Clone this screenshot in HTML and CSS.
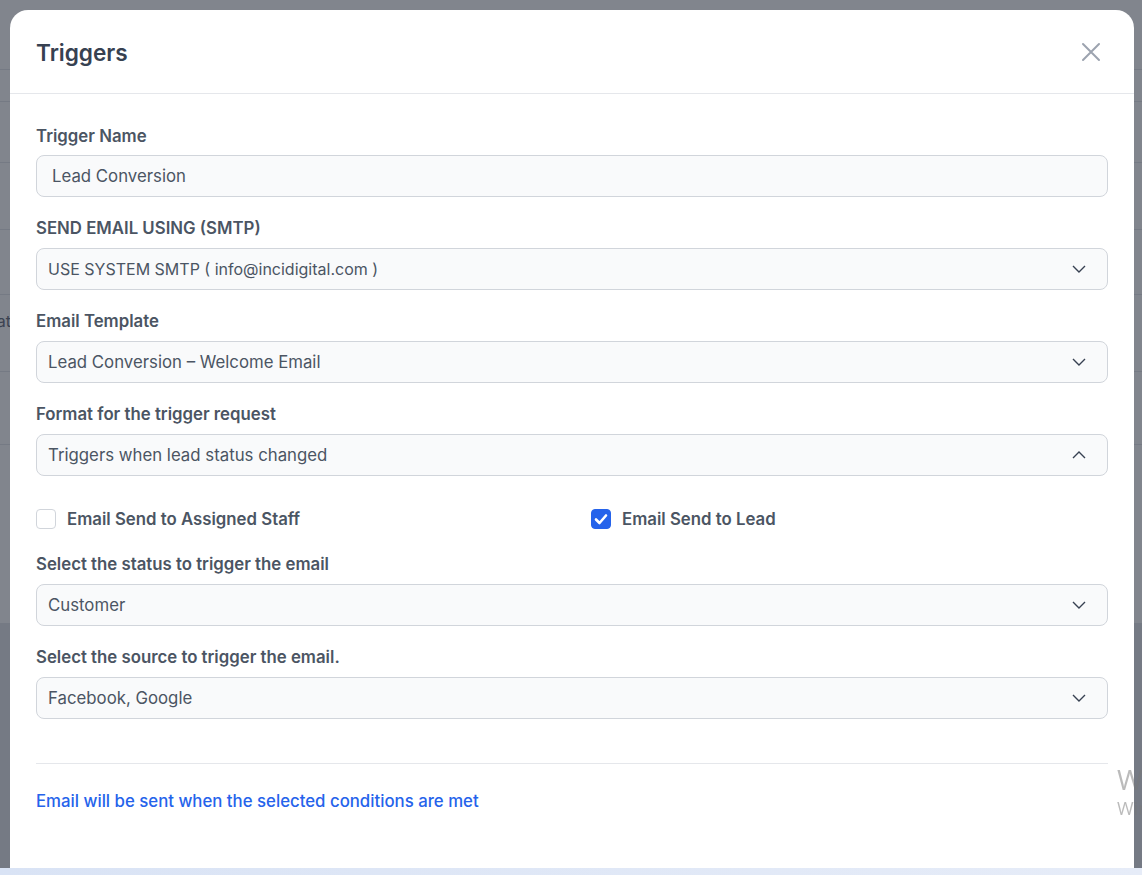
FILE: index.html
```html
<!DOCTYPE html>
<html lang="en">
<head>
  <meta charset="UTF-8">
  <meta name="viewport" content="width=device-width, initial-scale=1.0">
  <title>Triggers</title>
  <link rel="stylesheet" href="styles.css">
</head>
<body>
  <div class="page">
    <div class="page-table">
      <div class="row" style="height: 70px"></div>
      <div class="row" style="height: 32px"></div>
      <div class="row" style="height: 61px"></div>
      <div class="row" style="height: 67px"></div>
      <div class="row" style="height: 65px"></div>
      <div class="row row-text" style="height: 77px"><span class="cut">Format</span></div>
      <div class="row" style="height: 73px"></div>
      <div class="row last" style="height: 178px"></div>
    </div>
  </div>

  <div class="overlay"></div>

  <div class="modal">
    <div class="modal-header">
      <h2>Triggers</h2>
      <button class="close" aria-label="Close">
        <svg width="20" height="20" viewBox="0 0 20 20"><path d="M2 2 L18 18 M18 2 L2 18" stroke="#9ca3af" stroke-width="2" stroke-linecap="round"/></svg>
      </button>
    </div>

    <div class="modal-body">
      <div class="field">
        <label>Trigger Name</label>
        <div class="input">Lead Conversion</div>
      </div>

      <div class="field">
        <label>SEND EMAIL USING (SMTP)</label>
        <div class="select">
          <span class="narrow">USE SYSTEM SMTP ( info@incidigital.com )</span>
          <svg width="14" height="8" viewBox="0 0 14 8"><polyline points="1,1 7,7 13,1" fill="none" stroke="#374151" stroke-width="1.4"/></svg>
        </div>
      </div>

      <div class="field">
        <label>Email Template</label>
        <div class="select">
          <span>Lead Conversion – Welcome Email</span>
          <svg width="14" height="8" viewBox="0 0 14 8"><polyline points="1,1 7,7 13,1" fill="none" stroke="#374151" stroke-width="1.4"/></svg>
        </div>
      </div>

      <div class="field">
        <label>Format for the trigger request</label>
        <div class="select">
          <span>Triggers when lead status changed</span>
          <svg width="14" height="8" viewBox="0 0 14 8"><polyline points="1,7 7,1 13,7" fill="none" stroke="#374151" stroke-width="1.4"/></svg>
        </div>
      </div>

      <div class="checks">
        <div class="check">
          <span class="box"></span>
          <span>Email Send to Assigned Staff</span>
        </div>
        <div class="check">
          <span class="box checked">
            <svg width="14" height="12" viewBox="0 0 14 12"><polyline points="2,6.5 5.5,10 12,2.5" fill="none" stroke="#fff" stroke-width="2.6" stroke-linecap="round" stroke-linejoin="round"/></svg>
          </span>
          <span>Email Send to Lead</span>
        </div>
      </div>

      <div class="field">
        <label>Select the status to trigger the email</label>
        <div class="select">
          <span>Customer</span>
          <svg width="14" height="8" viewBox="0 0 14 8"><polyline points="1,1 7,7 13,1" fill="none" stroke="#374151" stroke-width="1.4"/></svg>
        </div>
      </div>

      <div class="field">
        <label>Select the source to trigger the email.</label>
        <div class="select">
          <span>Facebook, Google</span>
          <svg width="14" height="8" viewBox="0 0 14 8"><polyline points="1,1 7,7 13,1" fill="none" stroke="#374151" stroke-width="1.4"/></svg>
        </div>
      </div>

      <div class="divider"></div>

      <p class="note">Email will be sent when the selected conditions are met</p>
    </div>
  </div>

  <div class="watermark">
    <div class="wm-title">Windows</div>
    <div class="wm-sub">Windows</div>
  </div>

  <div class="taskbar"></div>
</body>
</html>
```

FILE: styles.css
```css
body {
  margin: 0;
  font-family: Inter, "Noto Sans", Arial, sans-serif;
  background-color: #e5e7eb;
  height: 875px;
  overflow: hidden;
}

.page-table {
  background: #ffffff;
}

.page-table .row {
  border-bottom: 1px solid #e5e7eb;
  box-sizing: border-box;
  display: flex;
  align-items: center;
}

.page-table .row.last {
  border-bottom: none;
}

.page-table .row.row-text {
  align-items: flex-start;
  padding-top: 16px;
}

.cut {
  display: block;
  width: 11px;
  direction: rtl;
  overflow: hidden;
  white-space: nowrap;
  color: #6b7280;
  font-size: 16px;
  line-height: 20px;
}

.overlay {
  position: fixed;
  inset: 0;
  background: rgba(17, 24, 39, 0.53);
}

.modal {
  position: fixed;
  top: 10px;
  left: 10px;
  width: 1124px;
  height: 880px;
  background: #ffffff;
  border-radius: 18px;
  box-sizing: border-box;
}

.modal-header {
  height: 84px;
  border-bottom: 1px solid #e5e7eb;
  box-sizing: border-box;
  display: flex;
  align-items: center;
  justify-content: space-between;
  padding: 0 33px 0 26px;
}

.modal-header h2 {
  margin: 0;
  font-size: 22.6px;
  font-weight: 600;
  color: #374151;
  padding-top: 1px;
}

.close {
  background: none;
  border: none;
  padding: 0;
  width: 20px;
  height: 20px;
  cursor: pointer;
}

.modal-body {
  padding: 32px 26px 0;
}

.field {
  margin-bottom: 21px;
}

.field label {
  display: block;
  font-size: 16.8px;
  line-height: 20px;
  font-weight: 600;
  color: #4b5563;
  margin-bottom: 10px;
}

.field:first-child label {
  margin-bottom: 9px;
}

.input, .select {
  height: 42px;
  box-sizing: border-box;
  border: 1px solid #d1d5db;
  border-radius: 8px;
  background: #f9fafb;
  font-size: 16.8px;
  color: #4b5563;
  display: flex;
  align-items: center;
}

.input {
  padding: 0 15px;
}

.select {
  padding: 0 21px 0 11px;
  justify-content: space-between;
}

.select .narrow {
  font-size: 16px;
}

.checks {
  display: grid;
  grid-template-columns: 1fr 1fr;
  column-gap: 38px;
  margin-top: 33px;
  margin-bottom: 25px;
}

.check {
  display: flex;
  align-items: center;
  gap: 11px;
  font-size: 16.8px;
  line-height: 20px;
  font-weight: 600;
  color: #4b5563;
}

.box {
  width: 20px;
  height: 20px;
  box-sizing: border-box;
  border: 1px solid #d1d5db;
  border-radius: 4px;
  background: #ffffff;
  display: flex;
  align-items: center;
  justify-content: center;
}

.box.checked {
  background: #2563eb;
  border-color: #2563eb;
}

.divider {
  border-top: 1px solid #e5e7eb;
  margin-top: 44px;
}

.note {
  margin: 27px 0 0;
  font-size: 16.8px;
  line-height: 20px;
  font-weight: 500;
  color: #2563eb;
}

.watermark {
  position: fixed;
  left: 1117px;
  top: 762px;
  white-space: nowrap;
  font-family: "Open Sans", Arial, sans-serif;
  color: rgba(120, 120, 120, 0.5);
}

.wm-title {
  font-size: 28px;
  line-height: 34px;
}

.wm-sub {
  font-size: 18px;
  line-height: 24px;
}

.taskbar {
  position: fixed;
  left: 0;
  right: 0;
  bottom: 0;
  height: 7px;
  background: linear-gradient(90deg, #d9e3f5, #e6ecf8);
}
```
